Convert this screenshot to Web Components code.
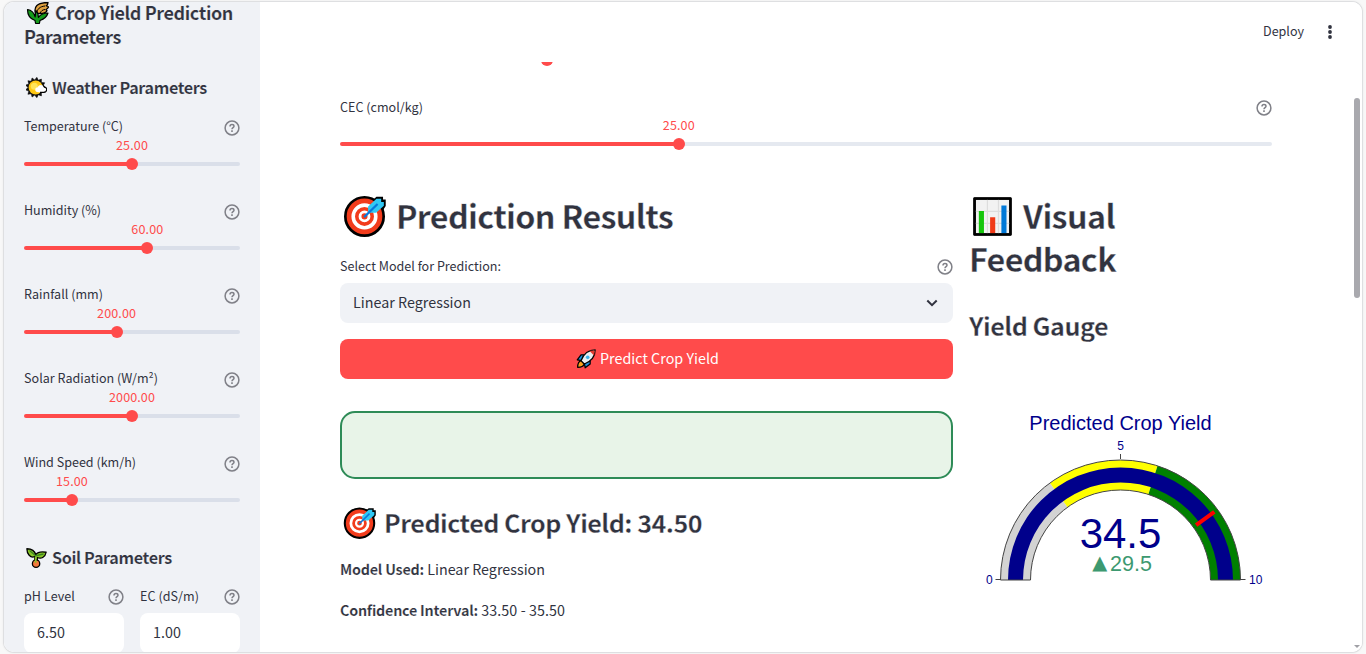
<!DOCTYPE html>
<html lang="en">
<head>
<meta charset="utf-8">
<title>Crop Yield Prediction</title>
<style>
html,body{margin:0;height:654px;overflow:hidden;background:#f8f8f8}
body{font-family:"Noto Sans CJK SC","Noto Sans",sans-serif;color:#31333f}
</style>
</head>
<body>
<crop-app></crop-app>
<script>
const define = (name, html, setup) => customElements.define(name, class extends HTMLElement {
  connectedCallback() {
    if (this.shadowRoot) return;
    const t = document.createElement('template');
    t.innerHTML = typeof html === 'function' ? html(this) : html;
    this.attachShadow({mode: 'open'}).append(t.content.cloneNode(true));
    if (setup) setup(this);
  }
});

/* One line of text, tracked so that it fills the width given in "w". */
define('fit-text', `<style>:host{display:inline-block;white-space:pre}</style><slot></slot>`, el => {
  const w = parseFloat(el.getAttribute('w'));
  if (!w) return;
  const natural = el.getBoundingClientRect().width;
  el.style.letterSpacing = ((w - natural) / el.textContent.length).toFixed(3) + 'px';
});

define('help-icon', `<style>:host{display:block;width:16px;height:16px;flex:none}svg{display:block}</style>
<svg width="16" height="16" viewBox="0 0 16 16" fill="none" stroke="#808188"><circle cx="8" cy="8" r="6.9" stroke-width="1.5"/><path d="M6 6.4C6 5.2 6.8 4.5 8 4.5s2 .7 2 1.7c0 1.3-2 1.5-2 3" stroke-width="1.5"/><path d="M8 10.3v1.6" stroke-width="1.6"/></svg>`);

const spikes = (cx, cy, n, r0, r1) => Array.from({length: n * 2}, (_, i) => {
  const a = Math.PI * i / n, r = i % 2 ? r0 : r1;
  return (cx + r * Math.cos(a)).toFixed(1) + ',' + (cy + r * Math.sin(a)).toFixed(1);
}).join(' ');
const art = {
  wheat: `<path d="M9.500 12.500C7.500 6 11 1.500 22 1.500c0 2-.8 2.800-1.800 3.300 1.300.2 2.300.7 2.300 1.200-.5 1.500-1.500 2-2.500 2.500l1 1.200c-1 2-3.500 2.800-7 2.800z" fill="#dfa03e" stroke-width="1.300"/><path d="M11 12c0-4 3-6.500 8-7M14 12.300c1-2.300 2.500-3.500 5-3.800" fill="none" stroke-width="1"/><path d="M1.500 8.500c3.500.5 6.500 3 7.700 7.500l.6-6.500c1.700 1.500 2.500 4 2.600 6.800 2.300-3 5-4.300 9.600-4.300-1 3.500-4 6-8 7.500l-.6 3H9.600L9 19.500c-4.500-1.500-7.500-5-7.500-11z" fill="#159a1b" stroke-width="1.200"/>`,
  sun: `<polygon points="${spikes(11, 12, 13, 8.8, 11.7)}" fill="#111" stroke-width=".6"/><circle cx="11" cy="12" r="8" fill="#ffc814" stroke="none"/><circle cx="9.500" cy="10.500" r="4" fill="#ffe45a" stroke="none"/><path d="M14 17.300c-4.500 0-4.500-5.500-.5-5.500 1-3.500 6-3.500 7 0 4 .2 3.500 5.500-.5 5.500z" fill="#fff" stroke="none"/><path d="M19.500 9.400c.8.500 1.200 1.200 1.500 2.200 3.800.4 3.500 5.900-.8 5.900H16" fill="none" stroke-width="1.300"/>`,
  sprout: `<path d="M10 11c-5 2-9-3-9-9 5 0 9 2 10 7 2-3 6-4 12-3-1 6-6 8-10 6v6h-3z" fill="#89c628"/><path d="M4 4l7 6 9-2" fill="none" stroke="#3e851e"/><circle cx="11.5" cy="19" r="4.2" fill="#f2783c"/><path d="M11 11v7" stroke="#89c628" stroke-width="2"/>`,
  target: `<path d="M15 6l4-3.600h2.500v1.500h1.500v2.600L20 11h-5z" fill="#000" stroke-width="1.700" stroke-linejoin="miter"/><circle cx="12" cy="12.500" r="10.700" fill="#f23c1c"/><circle cx="12" cy="12.500" r="6.300" fill="none" stroke="#fff" stroke-width="2"/><circle cx="12" cy="12.500" r="2.500" fill="none" stroke="#fff" stroke-width="1.600"/><path d="M14 10.500V7l4.700-4.300h2.600v1.700h1.500v2.100L18.500 10.500z" fill="#30c8f4" stroke="none"/><path d="M11.800 12.900L19.300 5.600" stroke="#0878dc" stroke-width="1.200"/>`,
  chart: `<path d="M1.5 1.5h21v21h-21z" fill="#f2f2f2"/><path d="M2 9h20M2 16h20M9 2v20M15.500 2v20" stroke="#ddd" stroke-width=".7"/><path d="M5.500 22V8.800" stroke="#16c60c" stroke-width="3"/><path d="M12.100 22v-9.600" stroke="#f03a17" stroke-width="3"/><path d="M18.700 22V5.600" stroke="#0078d7" stroke-width="3"/><path d="M1.500 1.500h21v21h-21z" fill="none" stroke-width="1.300"/>`,
  rocket: `<path d="M2 22c0-4 1-7 4-8l4 4c-1 3-4 4-8 4z" fill="#f9a11b"/><path d="M10 7H6l-4.500 6L7 14zM17 14v4l-6 4.500-1-5.500z" fill="#1c8fdc"/><path d="M6 14C9 6 14 1 23 1c0 9-5 14-13 17z" fill="#e9eef1"/><path d="M16 2.200L22.300 1.700l-.5 6.300z" fill="#e23a2e" stroke="none"/><circle cx="14" cy="10" r="2.200" fill="#3eb5ec" stroke="none"/>`
};
define('app-emoji', el => `<style>:host{display:inline-block;line-height:0;flex:none}svg{display:block}</style><svg width="${el.getAttribute('size')}" height="${el.getAttribute('size')}" viewBox="0 0 24 24" stroke="#000" stroke-width="1.5" stroke-linejoin="round">${art[el.getAttribute('name')]}</svg>`);

define('range-slider', el => {
  const p = el.getAttribute('pos');
  return `<style>
:host{display:block;height:54px;font-size:12.55px}
.row{display:flex;justify-content:space-between;height:20px;line-height:var(--label-line,20px)}
help-icon{margin-top:4px}
.val{height:20px;line-height:18px;padding-left:${p};color:#ff4b4b}
.val fit-text{transform:translateX(-50%)}
.line{display:flex;align-items:center;height:12px;margin-top:2px}
.done,.rest{height:4px;background:#ff4b4b;border-radius:2px 0 0 2px}
.done{width:${p};flex:none}
.rest{flex:1;background:var(--rail,#dadfe9);border-radius:0 2px 2px 0}
.dot{width:12px;height:12px;border-radius:50%;background:#ff4b4b;margin:0 -6px;flex:none;z-index:1}
</style><div class="row"><fit-text w="${el.getAttribute('w')}">${el.getAttribute('label')}</fit-text><help-icon></help-icon></div>
<div class="val"><fit-text w="${el.getAttribute('vw')}">${el.getAttribute('value')}</fit-text></div>
<div class="line"><div class="done"></div><div class="dot"></div><div class="rest"></div></div>`;
});

define('number-field', el => `<style>
:host{display:block;width:100px}
.row{display:flex;justify-content:space-between;height:25px;line-height:16px;font-size:12.55px}
help-icon{margin-top:1px}
.box{height:40px;line-height:38px;border-radius:8px;background:#fff;padding-left:13px;font-size:14.3px}
</style><div class="row"><fit-text w="${el.getAttribute('w')}">${el.getAttribute('label')}</fit-text><help-icon></help-icon></div><div class="box"><fit-text w="28">${el.getAttribute('value')}</fit-text></div>`);

define('side-bar', `<style>
:host{display:block;width:216px;height:650px;padding:0 20px;background:#f0f2f6;overflow:hidden}
h2,h3{margin:0;font-weight:600;-webkit-text-stroke:.15px #f0f2f6}
h2{height:71px;font-size:18px;line-height:24px}
.first{display:flex;height:22px;line-height:20px;gap:5px;padding-left:2px}
.first app-emoji{margin-top:-1px}
h3{display:flex;align-items:center;height:28px;font-size:16.2px;line-height:28px;gap:5px;padding-left:2px}
.sliders{display:grid;gap:30px;margin:15px 0 37px}
.fields{display:flex;gap:16px;margin-top:17px}
</style>
<h2><div class="first"><app-emoji name="wheat" size="24"></app-emoji><fit-text w="178">Crop Yield Prediction</fit-text></div><fit-text w="97">Parameters</fit-text></h2>
<h3><app-emoji name="sun" size="21"></app-emoji><fit-text w="155">Weather Parameters</fit-text></h3>
<div class="sliders">
<range-slider label="Temperature (°C)" w="99" value="25.00" vw="32" pos="50%"></range-slider>
<range-slider label="Humidity (%)" w="77" value="60.00" vw="32" pos="57.1%"></range-slider>
<range-slider label="Rainfall (mm)" w="79" value="200.00" vw="39" pos="42.85%"></range-slider>
<range-slider label="Solar Radiation (W/m²)" w="134" value="2000.00" vw="46" pos="50%"></range-slider>
<range-slider label="Wind Speed (km/h)" w="112" value="15.00" vw="32" pos="22.2%"></range-slider>
</div>
<h3><app-emoji name="sprout" size="21"></app-emoji><fit-text w="120">Soil Parameters</fit-text></h3>
<div class="fields"><number-field label="pH Level" w="51" value="6.50"></number-field><number-field label="EC (dS/m)" w="59" value="1.00"></number-field></div>`);

define('yield-gauge', el => {
  const cx = 151.5, cy = 180;
  const pt = (r, v) => { const a = Math.PI * (1 - v / 10); return (cx + r * Math.cos(a)).toFixed(2) + ' ' + (cy - r * Math.sin(a)).toFixed(2); };
  const band = (a, b, r0, r1, style) => `<path d="M${pt(r1, a)}A${r1} ${r1} 0 0 1 ${pt(r1, b)}L${pt(r0, b)}A${r0} ${r0} 0 0 0 ${pt(r0, a)}Z" ${style}/>`;
  return `<style>:host{display:block;height:200px}svg{display:block}text{font-family:"Liberation Sans",Arial,sans-serif;fill:#00008b}</style>
<svg width="303" height="200" viewBox="0 0 303 200">
${band(0, 3, 90, 120, 'fill="lightgray"')}${band(3, 6, 90, 120, 'fill="yellow"')}${band(6, 10, 90, 120, 'fill="green"')}
${band(0, 10, 97.5, 112.5, 'fill="#00008b"')}
${band(0, 10, 90, 120, 'fill="none" stroke="#444"')}
<path d="M${pt(93.5, 8)}L${pt(116, 8)}" stroke="red" stroke-width="4"/>
<path d="M26.500 179.500h5M151.500 54v5M271.500 179.500h5" stroke="#444"/>
<text x="151.5" y="30" font-size="20" text-anchor="middle">Predicted Crop Yield</text>
<text x="151.5" y="50" font-size="12" text-anchor="middle">5</text>
<text x="17" y="184" font-size="12">0</text>
<text x="280" y="184" font-size="12">10</text>
<text x="151.5" y="148" font-size="42" text-anchor="middle">34.5</text>
<text x="141" y="171" font-size="21.5" style="fill:#3d9970">29.5</text>
<text x="123.2" y="169" font-size="19.500" style="fill:#3d9970;font-family:'DejaVu Sans'">▲</text>
</svg>`;
});

define('results-panel', `<style>
:host{display:block;width:613px}
h1,h3,p{margin:0}
h1,h3{-webkit-text-stroke:.3px #fff}
h1{display:flex;align-items:center;height:43px;line-height:43px;font-size:32.3px;font-weight:600;padding-left:3px;gap:10px;margin-top:-2px}
.label{display:flex;justify-content:space-between;height:24px;line-height:20px;font-size:12.55px;margin-top:19px;margin-bottom:3px}
.label help-icon{margin-top:3px}
.select{display:flex;align-items:center;justify-content:space-between;height:40px;padding:0 13px;background:#f0f2f6;border-radius:8px;font-size:14.3px}
.select fit-text,.button fit-text{padding-bottom:3px}
.button{display:flex;align-items:center;justify-content:center;gap:4px;height:40px;margin-top:16px;background:#ff4b4b;color:#fff;border-radius:8px;font-size:14.3px}
.button{padding-left:2px;box-sizing:border-box}
.card{height:64px;margin-top:32px;border:2px solid #2e8b57;border-radius:15px;background:#e8f4e8}
h3{display:flex;align-items:center;height:34px;line-height:34px;margin-top:26px;font-size:25.1px;font-weight:600;gap:8px;padding-left:3px}
p{height:24px;line-height:24px;font-size:14.3px;margin-top:17px}
h3 + p{margin-top:18px}
b{font-weight:600;-webkit-text-stroke:.15px #fff}
</style>
<h1><app-emoji name="target" size="43"></app-emoji><fit-text w="277">Prediction Results</fit-text></h1>
<div class="label"><fit-text w="161">Select Model for Prediction:</fit-text><help-icon></help-icon></div>
<div class="select"><fit-text w="118">Linear Regression</fit-text><svg width="16" height="16" viewBox="0 0 16 16" fill="none" stroke="#31333f" stroke-width="2"><path d="M3.300 5.500L8 10.200l4.700-4.700"/></svg></div>
<div class="button"><app-emoji name="rocket" size="20"></app-emoji><fit-text w="119">Predict Crop Yield</fit-text></div>
<div class="card"></div>
<h3><app-emoji name="target" size="33"></app-emoji><fit-text w="318">Predicted Crop Yield: 34.50</fit-text></h3>
<p><b><fit-text w="84">Model Used:</fit-text></b><fit-text w="121"> Linear Regression</fit-text></p>
<p><b><fit-text w="138">Confidence Interval:</fit-text></b><fit-text w="87"> 33.50 - 35.50</fit-text></p>`);

define('visual-panel', `<style>
:host{display:block;width:303px}
h1,h3{margin:0;font-weight:600;-webkit-text-stroke:.3px #fff}
h1{height:86px;line-height:43px;font-size:32.3px;margin-top:-2px}
.first{display:flex;align-items:center;gap:10px;padding-left:3px;height:43px}
.first app-emoji{margin-top:2px}
h3{height:34px;line-height:34px;font-size:25.1px;margin-top:28px}
yield-gauge{margin-top:58px}
</style>
<h1><div class="first"><app-emoji name="chart" size="41"></app-emoji><fit-text w="92">Visual</fit-text></div><fit-text w="147">Feedback</fit-text></h1>
<h3><fit-text w="139">Yield Gauge</fit-text></h3>
<yield-gauge></yield-gauge>`);

define('top-bar', `<style>
:host{display:flex;height:60px;align-items:center;justify-content:flex-end;padding-right:24px;font-size:12.55px;gap:18px;flex:none}
fit-text{padding-bottom:3px}
svg{display:block}
</style><fit-text w="41">Deploy</fit-text><svg width="16" height="16" viewBox="0 0 16 16" fill="#31333f"><circle cx="8" cy="3" r="1.900"/><circle cx="8" cy="8" r="1.900"/><circle cx="8" cy="13" r="1.900"/></svg>`);

define('main-area', `<style>
:host{display:flex;flex-direction:column;flex:1;min-width:0;background:#fff}
.scroll{flex:1;overflow:hidden;padding:0 90px 0 80px;--rail:#e5e9f0;--label-line:22px}
.cols{display:flex;gap:16px;margin-top:46px}
.first{margin-top:-50px;margin-bottom:30px;--rail:transparent}
</style>
<top-bar></top-bar>
<div class="scroll">
<range-slider class="first" label="" value="" pos="22.2%"></range-slider>
<range-slider label="CEC (cmol/kg)" w="83" value="25.00" vw="32" pos="36.35%"></range-slider>
<div class="cols"><results-panel></results-panel><visual-panel></visual-panel></div>
</div>`);

define('crop-app', `<style>
:host{display:block;padding:2px 4px}
.frame{position:relative;display:flex;height:650px;border-radius:10px;overflow:hidden;background:#fff}
.wrap{border-radius:10px;box-shadow:0 0 0 1px #dedfe1,0 0 3px #d8d8d8}
.bar{position:absolute;right:2px;top:96px;width:6px;height:200px;border-radius:3px;background:#a9a9ae}
.down{position:absolute;right:2px;bottom:4px;border:3px solid transparent;border-top:3px solid #a0a0a5;border-bottom:0}
</style>
<div class="wrap"><div class="frame"><side-bar></side-bar><main-area></main-area><div class="bar"></div><div class="down"></div></div></div>`);
</script>
</body>
</html>
